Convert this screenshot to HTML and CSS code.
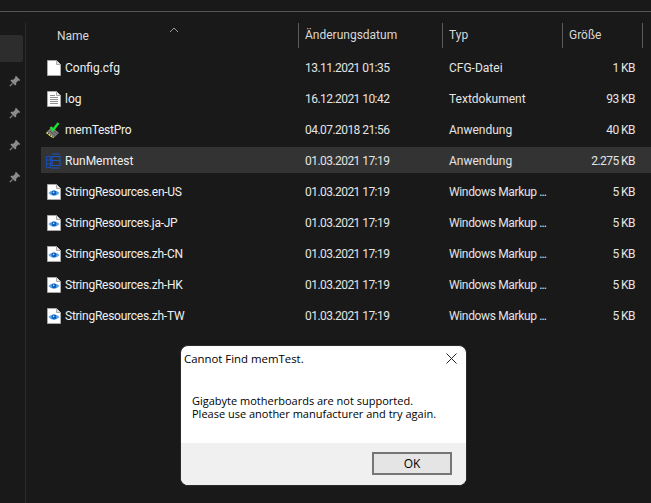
FILE: index.html
```html
<!DOCTYPE html>
<html lang="de">
<head>
<meta charset="utf-8">
<title>Explorer</title>
<link rel="stylesheet" href="styles.css">
</head>
<body>
<svg class="defs" width="0" height="0" aria-hidden="true">
  <defs>
    <symbol id="pin" viewBox="0 0 12 12">
      <path d="M7 .8 11.2 5 10.2 6 9.4 5.6 7.2 7.8 7.2 9.8 6.2 10.6 1.4 5.8 2.2 4.8 4.2 4.8 6.4 2.6 6 1.8Z" fill="#8b8b8b"/>
      <path d="M3.6 8.4.8 11.2" stroke="#8b8b8b" stroke-width="1.2"/>
    </symbol>
    <symbol id="xaml" viewBox="0 0 14 16">
      <path d="M.5.5H9.5L13.5 4.5V15.5H.5Z" fill="#fff" stroke="#a8a8a8"/>
      <path d="M9.5.5V4.5H13.5" fill="#e4e4e4" stroke="#a8a8a8"/>
      <path d="M1.5 9C3.8 5.6 10 5.6 12.5 9 10 12.4 3.8 12.4 1.5 9Z" fill="#58a6ea"/>
      <circle cx="7" cy="9" r="2.4" fill="#0f5cb8"/>
      <circle cx="6.6" cy="8.4" r=".8" fill="#bfe3ff"/>
    </symbol>
  </defs>
</svg>
<div class="topbar"></div>
<div class="explorer">
  <aside class="nav">
    <div class="nav-active"></div>
    <ul class="pins">
      <li><svg class="pin"><use href="#pin"/></svg></li>
      <li><svg class="pin"><use href="#pin"/></svg></li>
      <li><svg class="pin"><use href="#pin"/></svg></li>
      <li><svg class="pin"><use href="#pin"/></svg></li>
    </ul>
  </aside>
  <main class="files">
    <div class="header">
      <span class="h-name">Name<svg class="sort" viewBox="0 0 10 6"><path d="M1 5 5 1 9 5" fill="none" stroke="#9a9a9a"/></svg></span>
      <span class="h-col">Änderungsdatum</span>
      <span class="h-col">Typ</span>
      <span class="h-col h-last">Größe</span>
    </div>
    <div class="row">
      <span class="name"><svg class="icon" viewBox="0 0 14 16"><path d="M.5.5H9.5L13.5 4.5V15.5H.5Z" fill="#fff" stroke="#a8a8a8"/><path d="M9.5.5V4.5H13.5" fill="#e4e4e4" stroke="#a8a8a8"/></svg>Config.cfg</span>
      <span class="num">13.11.2021 01:35</span><span>CFG-Datei</span><span class="size num">1 KB</span>
    </div>
    <div class="row">
      <span class="name"><svg class="icon" viewBox="0 0 14 16"><path d="M.5.5H9.5L13.5 4.5V15.5H.5Z" fill="#fff" stroke="#a8a8a8"/><path d="M9.5.5V4.5H13.5" fill="#e4e4e4" stroke="#a8a8a8"/><path d="M3 4.5H8M3 6.5H11M3 8.5H11M3 10.5H11M3 12.5H11" stroke="#8e8e8e"/></svg>log</span>
      <span class="num">16.12.2021 10:42</span><span>Textdokument</span><span class="size num">93 KB</span>
    </div>
    <div class="row">
      <span class="name name-long"><svg class="icon icon-wide" viewBox="0 0 16 16"><path d="M2 9.5 7 5 14 11 9 15.5Z" fill="#7d7d7d"/><path d="M5 9 10 13.5M7 7.5 12 12" stroke="#4a4a4a"/><path d="M1.5 10.5 8.5 16" stroke="#efe05a" stroke-width="1.6" stroke-dasharray="2 .6"/><path d="M5.5 5 8 8 13.5 1" fill="none" stroke="#1de22c" stroke-width="2.4"/></svg>memTestPro</span>
      <span class="num">04.07.2018 21:56</span><span>Anwendung</span><span class="size num">40 KB</span>
    </div>
    <div class="row selected">
      <span class="name"><svg class="icon icon-wide" viewBox="0 0 16 16"><path d="M1.5 3.5H5.5V14.5H1.5ZM1.5 7H5.5M1.5 11H5.5" fill="none" stroke="#1a4cab" stroke-width="1.1"/><path d="M7 1H15M7 3.5H15V7.5H7ZM7 7.5V12.5H15V7.5M6 15H15" fill="none" stroke="#1d55bd" stroke-width="1.1"/></svg>RunMemtest</span>
      <span class="num">01.03.2021 17:19</span><span>Anwendung</span><span class="size num">2.275 KB</span>
    </div>
    <div class="row">
      <span class="name name-long"><svg class="icon"><use href="#xaml"/></svg>StringResources.en-US</span>
      <span class="num">01.03.2021 17:19</span><span class="type-long">Windows Markup <span class="ell">...</span></span><span class="size num">5 KB</span>
    </div>
    <div class="row">
      <span class="name name-long"><svg class="icon"><use href="#xaml"/></svg>StringResources.ja-JP</span>
      <span class="num">01.03.2021 17:19</span><span class="type-long">Windows Markup <span class="ell">...</span></span><span class="size num">5 KB</span>
    </div>
    <div class="row">
      <span class="name name-long"><svg class="icon"><use href="#xaml"/></svg>StringResources.zh-CN</span>
      <span class="num">01.03.2021 17:19</span><span class="type-long">Windows Markup <span class="ell">...</span></span><span class="size num">5 KB</span>
    </div>
    <div class="row">
      <span class="name name-long"><svg class="icon"><use href="#xaml"/></svg>StringResources.zh-HK</span>
      <span class="num">01.03.2021 17:19</span><span class="type-long">Windows Markup <span class="ell">...</span></span><span class="size num">5 KB</span>
    </div>
    <div class="row">
      <span class="name name-long"><svg class="icon"><use href="#xaml"/></svg>StringResources.zh-TW</span>
      <span class="num">01.03.2021 17:19</span><span class="type-long">Windows Markup <span class="ell">...</span></span><span class="size num">5 KB</span>
    </div>
  </main>
</div>
<section class="dialog">
  <div class="dialog-body">
    <div class="dialog-title">
      <span>Cannot Find memTest.</span>
      <svg class="close" viewBox="0 0 11 11"><path d="M.5.5 10.5 10.5M10.5.5.5 10.5" stroke="#222" stroke-width="1"/></svg>
    </div>
    <p class="dialog-text">Gigabyte motherboards are not supported.<br>Please use another manufacturer and try again.</p>
  </div>
  <div class="dialog-foot"><button class="ok">OK</button></div>
</section>
</body>
</html>
```
FILE: styles.css
```css
* { box-sizing: border-box; }
html, body { height: 100%; }
body {
  margin: 0;
  background: #191919;
  color: #e4e4e4;
  font: 12px Roboto, "Open Sans", sans-serif;
  overflow: hidden;
}
.defs { display: block; height: 0; }
.topbar { height: 12px; border-bottom: 1px solid #555; }
.explorer { display: flex; height: 491px; padding-top: 11px; }
.nav { width: 26px; border-right: 1px solid #2b2b2b; flex: none; padding-top: 12px; }
.nav-active { width: 23px; height: 27px; background: #2d2d2d; border-radius: 0 2px 2px 0; }
.pins { list-style: none; margin: 13px 0 0; padding: 0; display: flex; flex-direction: column; gap: 20px; }
.pins li { height: 12px; padding-left: 9px; line-height: 0; }
.pin { width: 12px; height: 12px; }
.files { flex: 1; padding-left: 15px; }
.header, .row {
  display: grid;
  grid-template-columns: 257px 144px 120px 77px;
  align-items: center;
}
.header { height: 25px; margin-bottom: 4px; color: #d8d8d8; }
.h-name { padding-left: 16px; position: relative; }
.h-col { border-left: 1px solid #5a5a5a; height: 25px; line-height: 25px; padding-left: 6px; }
.h-last { border-right: 1px solid #5a5a5a; width: 81px; }
.sort { position: absolute; left: 128px; top: -2px; width: 10px; height: 6px; }
.row { height: 31px; }
.row > span:not(.name) { padding-left: 7px; }
.row > span.size { text-align: right; padding: 0 4px 0 0; }
.num { letter-spacing: -.55px; }
.type-long { letter-spacing: -.35px; }
.ell { letter-spacing: -.9px; }
.name { display: flex; align-items: center; gap: 4px; padding-left: 6px; color: #f0f0f0; }
.name-long { letter-spacing: -.25px; }
.icon { width: 14px; height: 16px; flex: none; }
.icon-wide { width: 16px; margin-left: -2px; }
.selected { background: linear-gradient(#191919 2px, #333 2px, #333 28px, #191919 28px); border-radius: 2px; }
.dialog {
  position: absolute;
  left: 180px;
  top: 345px;
  width: 287px;
  height: 141px;
  background: #fff;
  color: #000;
  border: 1px solid #2a2a2a;
  border-radius: 8px;
  overflow: hidden;
  display: flex;
  flex-direction: column;
  font: 11px "Open Sans", sans-serif;
}
.dialog-body { flex: 1; }
.dialog-title { display: flex; justify-content: space-between; align-items: center; padding: 3px 9px 0 3px; height: 22px; font-size: 11.4px; }
.close { width: 11px; height: 11px; }
.dialog-text { margin: 26px 0 0 11px; line-height: 13px; }
.dialog-foot { height: 42px; background: #f0f0f0; display: flex; justify-content: flex-end; padding: 9px 14px 0 0; }
.ok { width: 80px; height: 23px; background: #e5e5e5; border: 2px solid #767676; font: 12px "Open Sans", sans-serif; color: #000; padding: 0; }
```
